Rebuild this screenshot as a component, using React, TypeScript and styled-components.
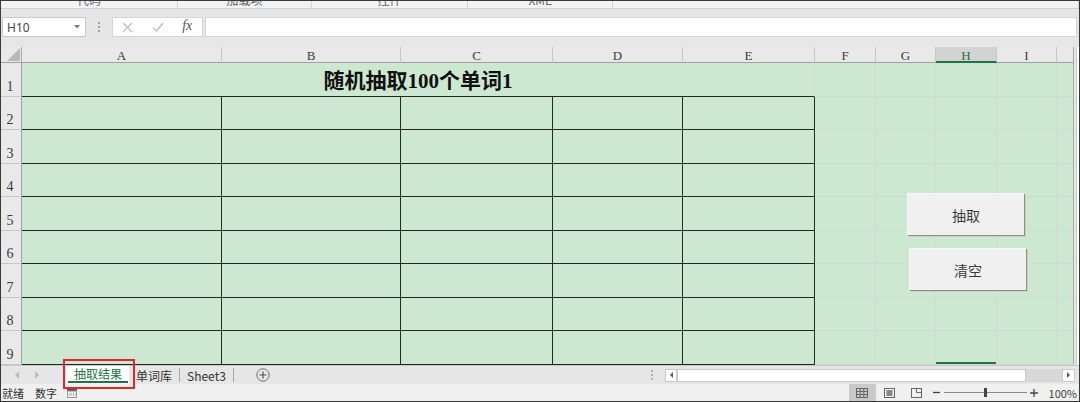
import React from 'react';
import styled, { createGlobalStyle, css } from 'styled-components';

const UI_FONT = `"Noto Sans CJK SC", "Noto Sans", sans-serif`;
const CELL_FONT = `"Liberation Serif", "Noto Sans CJK SC", serif`;
const GREEN = '#217346';
const SHEET_BG = '#cde8d0';
const GRIDLINE = '#d2d9d2';
const TABLE_LINE = '#262626';

const GlobalStyle = createGlobalStyle`
  html, body { margin: 0; padding: 0; background: #fff; }
  body { width: 1080px; height: 402px; overflow: hidden; font-family: ${UI_FONT}; }
  *, *::before, *::after { box-sizing: border-box; }
`;

const Frame = styled.div`
  width: 1080px;
  height: 402px;
  border: 1px solid #3a3a3a;
  display: flex;
  flex-direction: column;
  background: #e6e6e6;
  overflow: hidden;
`;

/* ---------- ribbon remnant ---------- */
const Ribbon = styled.div`
  height: 8px;
  flex: none;
  display: flex;
  background: #f3f3f3;
  border-bottom: 1px solid #d0d0d0;
  overflow: hidden;
`;
const RibbonGroup = styled.div<{ $w?: number }>`
  ${p => (p.$w ? css`width: ${p.$w}px; flex: none;` : css`flex: 1;`)}
  border-right: 1px solid #d4d4d4;
  display: flex;
  justify-content: center;
  align-items: flex-end;
  font: 12px/12px ${UI_FONT};
  color: #666;
`;
const RibbonLabel = styled.span`
  margin-bottom: 2px;
  white-space: nowrap;
`;

/* ---------- formula bar ---------- */
const FormulaArea = styled.div`
  height: 38px;
  flex: none;
  display: flex;
  align-items: flex-start;
  padding: 8px 2px 0 1px;
  background: #e6e6e6;
`;
const NameBox = styled.div`
  width: 84px;
  height: 20px;
  background: #fff;
  border: 1px solid #c8c8c8;
  display: flex;
  align-items: center;
  justify-content: space-between;
  padding: 0 5px 0 4px;
  font: 12px "Noto Sans", sans-serif;
  color: #444;
`;
const DotsSlot = styled.div`
  width: 26px;
  height: 20px;
  display: flex;
  align-items: center;
  justify-content: center;
`;
const FnBox = styled.div`
  width: 91px;
  height: 20px;
  background: #fff;
  border: 1px solid #d4d4d4;
  display: flex;
  align-items: center;
`;
const FnSlot = styled.div`
  width: 30px;
  height: 100%;
  display: flex;
  align-items: center;
  justify-content: center;
`;
const Fx = styled.span`
  font: italic 14px ${CELL_FONT};
  color: #555;
  margin-top: -2px;
`;
const FormulaInput = styled.div`
  flex: 1;
  height: 20px;
  margin-left: 2px;
  background: #fff;
  border: 1px solid #d4d4d4;
`;

/* ---------- sheet ---------- */
const Sheet = styled.div`
  height: 318px;
  flex: none;
  display: flex;
`;
const Grid = styled.div`
  position: relative;
  width: 1073px;
  display: grid;
  grid-template-columns: 21px 200px 179px 152px 130px 132px 61px 60px 61px 60px 17px;
  grid-template-rows: 16px 34px 33px 34px 33px 34px 33px 34px 33px 34px;
  background: ${SHEET_BG};
`;
const Corner = styled.div`
  position: relative;
  background: #e9e9e9;
  border-right: 1px solid #a8a8a8;
  border-bottom: 1px solid #a0a0a0;
  &::after {
    content: '';
    position: absolute;
    right: 1px;
    bottom: 1px;
    width: 13px;
    height: 13px;
    background: #b8b8b8;
    clip-path: polygon(100% 0, 100% 100%, 0 100%);
  }
`;
const ColHead = styled.div<{ $selected?: boolean; $last?: boolean }>`
  background: ${p => (p.$selected ? '#d3d3d3' : '#e9e9e9')};
  border-right: 1px solid ${p => (p.$last ? '#a8a8a8' : '#c8c8c8')};
  border-bottom: ${p => (p.$selected ? `2px solid ${GREEN}` : '1px solid #a0a0a0')};
  color: ${p => (p.$selected ? GREEN : '#3a3a3a')};
  font: 13px/16px ${CELL_FONT};
  text-align: center;
  padding-top: 1px;
`;
const RowHead = styled.div`
  background: #e9e9e9;
  border-right: 1px solid #a0a0a0;
  border-bottom: 1px solid #c8c8c8;
  color: #2f3a48;
  font: 14px/14px ${CELL_FONT};
  display: flex;
  align-items: flex-end;
  justify-content: center;
  padding: 0 2px 2px 0;
`;
const TitleCell = styled.div`
  grid-column: span 5;
  border-right: 1px solid ${GRIDLINE};
  border-bottom: 1px solid ${TABLE_LINE};
  display: flex;
  align-items: flex-end;
  justify-content: center;
  padding-bottom: 2px;
  font: bold 21px/25px ${CELL_FONT};
  color: #111;
`;
const TableCell = styled.div`
  border-right: 1px solid ${TABLE_LINE};
  border-bottom: 1px solid ${TABLE_LINE};
`;
const PlainCell = styled.div<{ $last?: boolean; $activeBelow?: boolean }>`
  border-right: 1px solid ${p => (p.$last ? '#a8a8a8' : GRIDLINE)};
  border-bottom: 1px solid ${GRIDLINE};
  ${p => p.$activeBelow && css`box-shadow: inset 0 -2px 0 ${GREEN};`}
`;
const SheetButton = styled.button<{ $left: number; $top: number }>`
  position: absolute;
  left: ${p => p.$left}px;
  top: ${p => p.$top}px;
  width: 117px;
  height: 42px;
  margin: 0;
  padding: 0;
  background: #f0f0f0;
  border: none;
  border-top: 1px solid #f8f8f8;
  border-left: 1px solid #f8f8f8;
  box-shadow: 1px 1px 0 #8e8e8e, 2px 2px 0 #c4cfc5;
  font: 14px ${UI_FONT};
  color: #3a3a3a;
`;
const VScroll = styled.div`
  width: 5px;
  flex: none;
  padding-left: 2px;
  display: flex;
  background: #e6e6e6;
`;
const VScrollTrack = styled.div`
  flex: 1;
  background: #fff;
  border-left: 1px solid #c8c8c8;
`;

/* ---------- sheet tabs ---------- */
const TabBar = styled.div`
  height: 19px;
  flex: none;
  display: flex;
  align-items: stretch;
  background: #e6e6e6;
  border-top: 1px solid #c6c6c6;
  font: 12px ${UI_FONT};
  color: #333;
`;
const Nav = styled.div`
  width: 65px;
  flex: none;
  display: flex;
  align-items: center;
  padding-left: 14px;
  gap: 16px;
`;
const NavArrow = styled.span<{ $dir: 'left' | 'right' }>`
  width: 0;
  height: 0;
  border-top: 4px solid transparent;
  border-bottom: 4px solid transparent;
  ${p =>
    p.$dir === 'left'
      ? css`border-right: 4px solid #bdbdbd;`
      : css`border-left: 4px solid #bdbdbd;`}
`;
const Tab = styled.div<{ $active?: boolean }>`
  position: relative;
  display: flex;
  align-items: center;
  padding: ${p => (p.$active ? '0 1px 0 2px' : '0 7px')};
  background: ${p => (p.$active ? '#fff' : 'transparent')};
  color: ${p => (p.$active ? GREEN : '#333')};
  white-space: nowrap;
`;
const ActiveLabel = styled.span`
  height: 17px;
  align-self: flex-start;
  display: flex;
  align-items: center;
  padding: 0 6px 1px;
  border-bottom: 2px solid ${GREEN};
`;
const Highlight = styled.div`
  position: absolute;
  left: -3px;
  top: -7px;
  width: 72px;
  height: 30px;
  border: 2px solid #e3262b;
  z-index: 5;
  pointer-events: none;
`;
const TabSep = styled.span`
  width: 1px;
  height: 14px;
  align-self: center;
  background: #a8a8a8;
`;
const AddSheet = styled.div`
  display: flex;
  align-items: center;
  margin-left: 22px;
`;
const Spacer = styled.div`
  flex: 1;
`;
const HScroll = styled.div`
  display: flex;
  align-items: center;
  margin-right: 4px;
`;
const HDots = styled.div`
  width: 14px;
  margin-right: 6px;
  display: flex;
  justify-content: center;
`;
const ScrollBox = styled.div<{ $w: number; $fill?: string }>`
  width: ${p => p.$w}px;
  height: 13px;
  background: ${p => p.$fill || '#fff'};
  border: ${p => (p.$fill ? 'none' : '1px solid #cacaca')};
  display: flex;
  align-items: center;
  justify-content: center;
`;
const TinyArrow = styled.span<{ $dir: 'left' | 'right' }>`
  width: 0;
  height: 0;
  border-top: 3px solid transparent;
  border-bottom: 3px solid transparent;
  ${p =>
    p.$dir === 'left'
      ? css`border-right: 3px solid #555;`
      : css`border-left: 3px solid #555;`}
`;

/* ---------- status bar ---------- */
const StatusBar = styled.div`
  height: 17px;
  flex: none;
  display: flex;
  align-items: center;
  padding-left: 1px;
  background: #f0f0f0;
  font: 11px ${UI_FONT};
  color: #333;
`;
const StatusText = styled.span<{ $gap?: number }>`
  margin-left: ${p => p.$gap || 0}px;
  white-space: nowrap;
`;
const StatusIcon = styled.span`
  margin-left: 10px;
  display: flex;
  align-items: center;
`;
const StatusRight = styled.div`
  margin-left: auto;
  height: 100%;
  display: flex;
  align-items: center;
`;
const ViewBtn = styled.div<{ $active?: boolean }>`
  width: 27px;
  height: 100%;
  display: flex;
  align-items: center;
  justify-content: center;
  background: ${p => (p.$active ? '#c9c9c9' : 'transparent')};
`;
const ZoomSign = styled.div<{ $w: number }>`
  width: ${p => p.$w}px;
  display: flex;
  justify-content: center;
`;
const Slider = styled.div`
  position: relative;
  width: 83px;
  height: 100%;
  display: flex;
  align-items: center;
`;
const SliderLine = styled.div`
  width: 100%;
  height: 1px;
  background: #8a8a8a;
`;
const SliderThumb = styled.div`
  position: absolute;
  left: 40px;
  top: 4px;
  width: 3px;
  height: 9px;
  background: #444;
`;
const ZoomText = styled.span`
  margin-left: 7px;
  padding-right: 2px;
  color: #444;
`;

/* ---------- icons ---------- */
const DropTri = () => (
  <svg width="6" height="4" viewBox="0 0 6 4"><path d="M0 0h6L3 3.5z" fill="#777" /></svg>
);
const VDots = ({ color = '#a0a0a0' }: { color?: string }) => (
  <svg width="2" height="10" viewBox="0 0 2 10">
    <rect x="0" y="0" width="2" height="2" fill={color} />
    <rect x="0" y="4" width="2" height="2" fill={color} />
    <rect x="0" y="8" width="2" height="2" fill={color} />
  </svg>
);
const CrossIcon = () => (
  <svg width="11" height="11" viewBox="0 0 11 11">
    <path d="M1 1L10 10M10 1L1 10" stroke="#bdbdbd" strokeWidth="1.2" />
  </svg>
);
const CheckIcon = () => (
  <svg width="12" height="10" viewBox="0 0 12 10">
    <path d="M1 5.5L4.5 9L11 1" stroke="#bdbdbd" strokeWidth="1.4" fill="none" />
  </svg>
);
const PlusCircle = () => (
  <svg width="14" height="14" viewBox="0 0 14 14">
    <circle cx="7" cy="7" r="6.2" fill="none" stroke="#707070" strokeWidth="1" />
    <path d="M7 3.5v7M3.5 7h7" stroke="#555" strokeWidth="1.2" />
  </svg>
);
const MacroIcon = () => (
  <svg width="10" height="10" viewBox="0 0 10 10">
    <rect x="0" y="0" width="10" height="3" fill="#555" />
    <rect x="0.5" y="3" width="9" height="6.5" fill="none" stroke="#999" strokeWidth="1" />
    <path d="M3.5 3v7M6.5 3v7M0 6.3h10" stroke="#999" strokeWidth="0.8" strokeDasharray="1 1" />
  </svg>
);
const NormalViewIcon = () => (
  <svg width="12" height="10" viewBox="0 0 12 10">
    <rect x="0.5" y="0.5" width="11" height="9" fill="none" stroke="#666" />
    <path d="M4.2 0.5v9M7.8 0.5v9M0.5 3.5h11M0.5 6.5h11" stroke="#666" strokeWidth="1" />
  </svg>
);
const PageLayoutIcon = () => (
  <svg width="11" height="10" viewBox="0 0 11 10">
    <rect x="0.5" y="0.5" width="10" height="9" fill="none" stroke="#666" />
    <rect x="2.5" y="2" width="6" height="6" fill="#888" />
  </svg>
);
const PageBreakIcon = () => (
  <svg width="11" height="10" viewBox="0 0 11 10">
    <rect x="0.5" y="0.5" width="10" height="9" fill="none" stroke="#666" />
    <path d="M5.5 0.5v4h5" stroke="#666" fill="none" />
  </svg>
);
const MinusSign = () => (
  <svg width="7" height="7" viewBox="0 0 7 7"><path d="M0 3.5h7" stroke="#444" strokeWidth="1.3" /></svg>
);
const PlusSign = () => (
  <svg width="8" height="8" viewBox="0 0 8 8"><path d="M0 4h8M4 0v8" stroke="#444" strokeWidth="1.3" /></svg>
);

/* ---------- data ---------- */
const COLS = ['A', 'B', 'C', 'D', 'E', 'F', 'G', 'H', 'I', ''];
const RIGHT_COLS = ['F', 'G', 'H', 'I', 'J'];
const TABLE_COLS = ['A', 'B', 'C', 'D', 'E'];
const ROWS = [1, 2, 3, 4, 5, 6, 7, 8, 9];
const RIBBON = [
  { label: '代码', w: 177 },
  { label: '加载项', w: 134 },
  { label: '控件', w: 156 },
  { label: 'XML', w: 145 },
];

export default function App() {
  return (
    <>
      <GlobalStyle />
      <Frame>
        <Ribbon>
          {RIBBON.map(g => (
            <RibbonGroup key={g.label} $w={g.w}>
              <RibbonLabel>{g.label}</RibbonLabel>
            </RibbonGroup>
          ))}
          <RibbonGroup />
        </Ribbon>

        <FormulaArea>
          <NameBox>
            <span>H10</span>
            <DropTri />
          </NameBox>
          <DotsSlot>
            <VDots />
          </DotsSlot>
          <FnBox>
            <FnSlot><CrossIcon /></FnSlot>
            <FnSlot><CheckIcon /></FnSlot>
            <FnSlot><Fx>fx</Fx></FnSlot>
          </FnBox>
          <FormulaInput />
        </FormulaArea>

        <Sheet>
          <Grid>
            <Corner />
            {COLS.map((c, i) => (
              <ColHead key={`h${i}`} $selected={c === 'H'} $last={i === COLS.length - 1}>
                {c}
              </ColHead>
            ))}
            {ROWS.map(r => (
              <React.Fragment key={r}>
                <RowHead>{r}</RowHead>
                {r === 1 ? (
                  <TitleCell>随机抽取100个单词1</TitleCell>
                ) : (
                  TABLE_COLS.map(c => <TableCell key={c + r} />)
                )}
                {RIGHT_COLS.map(c => (
                  <PlainCell
                    key={c + r}
                    $last={c === 'J'}
                    $activeBelow={c === 'H' && r === 9}
                  />
                ))}
              </React.Fragment>
            ))}
            <SheetButton $left={906} $top={146}>抽取</SheetButton>
            <SheetButton $left={908} $top={201}>清空</SheetButton>
          </Grid>
          <VScroll>
            <VScrollTrack />
          </VScroll>
        </Sheet>

        <TabBar>
          <Nav>
            <NavArrow $dir="left" />
            <NavArrow $dir="right" />
          </Nav>
          <Tab $active>
            <ActiveLabel>抽取结果</ActiveLabel>
            <Highlight />
          </Tab>
          <Tab>单词库</Tab>
          <TabSep />
          <Tab>Sheet3</Tab>
          <TabSep />
          <AddSheet>
            <PlusCircle />
          </AddSheet>
          <Spacer />
          <HScroll>
            <HDots>
              <VDots color="#b0b0b0" />
            </HDots>
            <ScrollBox $w={12}><TinyArrow $dir="left" /></ScrollBox>
            <ScrollBox $w={349} />
            <ScrollBox $w={36} $fill="#d8d8d8" />
            <ScrollBox $w={13}><TinyArrow $dir="right" /></ScrollBox>
          </HScroll>
        </TabBar>

        <StatusBar>
          <StatusText>就绪</StatusText>
          <StatusText $gap={11}>数字</StatusText>
          <StatusIcon>
            <MacroIcon />
          </StatusIcon>
          <StatusRight>
            <ViewBtn $active><NormalViewIcon /></ViewBtn>
            <ViewBtn><PageLayoutIcon /></ViewBtn>
            <ViewBtn><PageBreakIcon /></ViewBtn>
            <ZoomSign $w={14}><MinusSign /></ZoomSign>
            <Slider>
              <SliderLine />
              <SliderThumb />
            </Slider>
            <ZoomSign $w={15}><PlusSign /></ZoomSign>
            <ZoomText>100%</ZoomText>
          </StatusRight>
        </StatusBar>
      </Frame>
    </>
  );
}
